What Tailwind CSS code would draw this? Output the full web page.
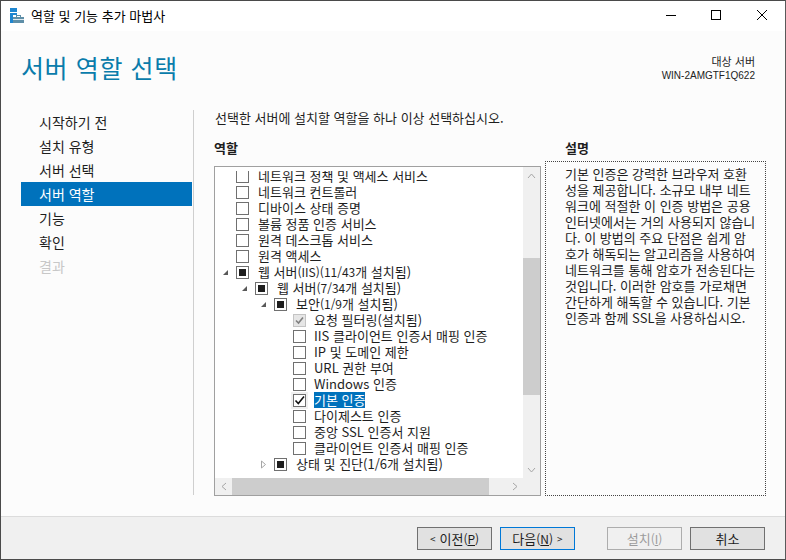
<!doctype html>
<html lang="ko"><head><meta charset="utf-8">
<script src="https://cdn.jsdelivr.net/npm/@tailwindcss/browser@4"></script>
</head>
<body class="m-0 overflow-hidden bg-[#fcfcfc]">
<div class="w-[786px] h-[560px] flex flex-col border border-[#4a4a4a] border-r-[#5a5a5a] font-['Noto_Sans_CJK_KR','Noto_Sans',sans-serif] text-[13px] text-[#1e1e1e] overflow-hidden">
  <!-- title bar -->
  <div class="h-[30px] shrink-0 bg-white flex items-center">
    <svg class="ml-[9px] mr-[7px] mb-[2px] shrink-0" width="14" height="15" viewBox="0 0 14 15"><rect x="0" y="0" width="7" height="4" fill="#1f86d0"/><rect x="0" y="5" width="7" height="2" fill="#1f86d0"/><rect x="0" y="7" width="3" height="8" fill="#1f86d0"/><rect x="3" y="9" width="11" height="6" fill="#5f8fa8"/><rect x="6.500" y="7.500" width="4" height="2" fill="none" stroke="#5f8fa8"/><rect x="3" y="11" width="11" height="1" fill="#dfe9ef"/></svg>
    <span class="text-black mb-[1px]">역할 및 기능 추가 마법사</span>
    <div class="ml-auto flex items-center">
      <svg width="46" height="30" viewBox="0 0 46 30"><path d="M19 14.500h10" stroke="#000" fill="none"/></svg>
      <svg width="46" height="30" viewBox="0 0 46 30"><rect x="18.500" y="9.500" width="9" height="9" stroke="#000" fill="none"/></svg>
      <svg width="46" height="30" viewBox="0 0 46 30"><path d="M18 9l10 10M28 9l-10 10" stroke="#000" fill="none"/></svg>
    </div>
  </div>
  <!-- header -->
  <div class="h-[71px] shrink-0 flex justify-between">
    <h1 class="ml-[20px] mt-[18px] text-[25px] leading-[36px] font-normal text-[#0a7cab] tracking-[0.6px]">서버 역할 선택</h1>
    <div class="mr-[30px] mt-[23px] text-right text-[11px] leading-[14px] text-[#222]">
      <div>대상 서버</div><div class="font-['Liberation_Sans'] text-[10px] leading-[15px]">WIN-2AMGTF1Q622</div>
    </div>
  </div>
  <!-- body -->
  <div class="flex-1 flex min-h-0">
    <nav class="w-[171px] ml-[20px] mt-[8px] shrink-0 flex flex-col text-[14px]">
      <div class="h-[24px] pl-[18px] flex items-center">시작하기 전</div>
      <div class="h-[24px] pl-[18px] flex items-center">설치 유형</div>
      <div class="h-[24px] pl-[18px] flex items-center">서버 선택</div>
      <div class="h-[24px] pl-[18px] flex items-center bg-[#0072bc] text-white">서버 역할</div>
      <div class="h-[24px] pl-[18px] flex items-center">기능</div>
      <div class="h-[24px] pl-[18px] flex items-center">확인</div>
      <div class="h-[24px] pl-[18px] flex items-center text-[#c8c8c8]">결과</div>
    </nav>
    <div class="w-px ml-px h-[385px] mt-[8px] bg-[#cfcfcf] shrink-0"></div>
    <main class="flex-1 ml-[20px] mr-[20px] flex flex-col">
      <p class="h-[28px] mt-[2px] ml-px flex items-center">선택한 서버에 설치할 역할을 하나 이상 선택하십시오.</p>
      <div class="flex h-[24px] font-bold items-center mt-[4px]">
        <div class="w-[351px]">역할</div><div>설명</div>
      </div>
      <div class="flex items-start mt-px">
        <div class="mt-[5px] w-[327px] h-[330px] border border-[#a0a0a0] bg-white flex flex-col shrink-0">
          <div class="flex-1 flex min-h-0">
            <div class="flex-1 min-w-0 overflow-hidden pt-[4px]">
              <div class="h-[307px] overflow-hidden"><div class="mt-[-3px] leading-[16px]">
                <div class="h-[16px] flex items-center pl-[21px]"><span class="w-[13px] h-[13px] border border-[#707070] bg-white shrink-0"></span><span class="ml-[9px]">네트워크 정책 및 액세스 서비스</span></div>
                <div class="h-[16px] flex items-center pl-[21px]"><span class="w-[13px] h-[13px] border border-[#707070] bg-white shrink-0"></span><span class="ml-[9px]">네트워크 컨트롤러</span></div>
                <div class="h-[16px] flex items-center pl-[21px]"><span class="w-[13px] h-[13px] border border-[#707070] bg-white shrink-0"></span><span class="ml-[9px]">디바이스 상태 증명</span></div>
                <div class="h-[16px] flex items-center pl-[21px]"><span class="w-[13px] h-[13px] border border-[#707070] bg-white shrink-0"></span><span class="ml-[9px]">볼륨 정품 인증 서비스</span></div>
                <div class="h-[16px] flex items-center pl-[21px]"><span class="w-[13px] h-[13px] border border-[#707070] bg-white shrink-0"></span><span class="ml-[9px]">원격 데스크톱 서비스</span></div>
                <div class="h-[16px] flex items-center pl-[21px]"><span class="w-[13px] h-[13px] border border-[#707070] bg-white shrink-0"></span><span class="ml-[9px]">원격 액세스</span></div>
                <div class="h-[16px] flex items-center pl-[7px]"><svg class="w-[7px] h-[7px] mr-[7px] shrink-0" viewBox="0 0 7 7"><path d="M6 1v5H1z" fill="#595959"/></svg><span class="w-[13px] h-[13px] border border-[#707070] bg-white shrink-0 flex items-center justify-center"><span class="w-[7px] h-[7px] bg-[#1e1e1e]"></span></span><span class="ml-[9px]">웹 서버<span class="text-[12px]">(IIS)(11/43</span>개 설치됨)</span></div>
                <div class="h-[16px] flex items-center pl-[26px]"><svg class="w-[7px] h-[7px] mr-[7px] shrink-0" viewBox="0 0 7 7"><path d="M6 1v5H1z" fill="#595959"/></svg><span class="w-[13px] h-[13px] border border-[#707070] bg-white shrink-0 flex items-center justify-center"><span class="w-[7px] h-[7px] bg-[#1e1e1e]"></span></span><span class="ml-[9px]">웹 서버<span class="text-[12px]">(7/34</span>개 설치됨)</span></div>
                <div class="h-[16px] flex items-center pl-[45px]"><svg class="w-[7px] h-[7px] mr-[7px] shrink-0" viewBox="0 0 7 7"><path d="M6 1v5H1z" fill="#595959"/></svg><span class="w-[13px] h-[13px] border border-[#707070] bg-white shrink-0 flex items-center justify-center"><span class="w-[7px] h-[7px] bg-[#1e1e1e]"></span></span><span class="ml-[9px]">보안<span class="text-[12px]">(1/9</span>개 설치됨)</span></div>
                <div class="h-[16px] flex items-center pl-[78px]"><span class="w-[13px] h-[13px] border border-[#c4c4c4] bg-[#e6e6e6] shrink-0 flex items-center justify-center"><svg width="11" height="11" viewBox="0 0 11 11"><path d="M2 5.500l2.500 2.500L9 2.500" stroke="#808080" stroke-width="1.600" fill="none"/></svg></span><span class="ml-[8px]">요청 필터링(설치됨)</span></div>
                <div class="h-[16px] flex items-center pl-[78px]"><span class="w-[13px] h-[13px] border border-[#707070] bg-white shrink-0"></span><span class="ml-[8px]">IIS 클라이언트 인증서 매핑 인증</span></div>
                <div class="h-[16px] flex items-center pl-[78px]"><span class="w-[13px] h-[13px] border border-[#707070] bg-white shrink-0"></span><span class="ml-[8px]">IP 및 도메인 제한</span></div>
                <div class="h-[16px] flex items-center pl-[78px]"><span class="w-[13px] h-[13px] border border-[#707070] bg-white shrink-0"></span><span class="ml-[8px]">URL 권한 부여</span></div>
                <div class="h-[16px] flex items-center pl-[78px]"><span class="w-[13px] h-[13px] border border-[#707070] bg-white shrink-0"></span><span class="ml-[8px]">Windows 인증</span></div>
                <div class="h-[16px] flex items-center pl-[78px]"><span class="w-[13px] h-[13px] border border-[#707070] bg-white shrink-0 flex items-center justify-center ring-2 ring-[#f0f0f0]"><svg width="11" height="11" viewBox="0 0 11 11"><path d="M1.500 5.500l2.800 3L10 1.500" stroke="#111" stroke-width="1.600" fill="none"/></svg></span><span class="ml-[8px] h-[16px] leading-[16px] bg-[#0072bc] text-white">기본 인증</span></div>
                <div class="h-[16px] flex items-center pl-[78px]"><span class="w-[13px] h-[13px] border border-[#707070] bg-white shrink-0"></span><span class="ml-[8px]">다이제스트 인증</span></div>
                <div class="h-[16px] flex items-center pl-[78px]"><span class="w-[13px] h-[13px] border border-[#707070] bg-white shrink-0"></span><span class="ml-[8px]">중앙 SSL 인증서 지원</span></div>
                <div class="h-[16px] flex items-center pl-[78px]"><span class="w-[13px] h-[13px] border border-[#707070] bg-white shrink-0"></span><span class="ml-[8px]">클라이언트 인증서 매핑 인증</span></div>
                <div class="h-[16px] flex items-center pl-[45px]"><svg class="w-[7px] h-[9px] mr-[7px] shrink-0" viewBox="0 0 7 9"><path d="M1.500 1v7l4-3.500z" fill="none" stroke="#a6a6a6"/></svg><span class="w-[13px] h-[13px] border border-[#707070] bg-white shrink-0 flex items-center justify-center"><span class="w-[7px] h-[7px] bg-[#1e1e1e]"></span></span><span class="ml-[9px]">상태 및 진단(1/6개 설치됨)</span></div>
              </div></div>
            </div>
            <div class="w-[17px] bg-[#f0f0f0] shrink-0 flex flex-col">
              <div class="h-[17px] flex items-center justify-center"><svg width="9" height="6" viewBox="0 0 9 6"><path d="M1 5l3.500-4L8 5" stroke="#a6a6a6" fill="none"/></svg></div>
              <div class="h-[74px]"></div>
              <div class="h-[137px] bg-[#cdcdcd]"></div>
              <div class="flex-1"></div>
              <div class="h-[17px] flex items-center justify-center"><svg width="9" height="6" viewBox="0 0 9 6"><path d="M1 1l3.500 4L8 1" stroke="#a6a6a6" fill="none"/></svg></div>
            </div>
          </div>
          <div class="h-[17px] shrink-0 bg-[#f0f0f0] flex">
            <div class="w-[17px] flex items-center justify-center"><svg width="6" height="9" viewBox="0 0 6 9"><path d="M5 1L1 4.500 5 8" stroke="#a6a6a6" fill="none"/></svg></div>
            <div class="w-[257px] bg-[#cdcdcd]"></div>
            <div class="flex-1 flex items-center justify-center"><svg width="6" height="9" viewBox="0 0 6 9"><path d="M1 1l4 3.500L1 8" stroke="#a6a6a6" fill="none"/></svg></div>
          </div>
        </div>
        <div class="ml-[4px] w-[221px] h-[335px] border border-dotted border-[#444] pl-[19px] pt-[4px] leading-[16px] whitespace-nowrap">기본 인증은 강력한 브라우저 호환<br>성을 제공합니다. 소규모 내부 네트<br>워크에 적절한 이 인증 방법은 공용<br>인터넷에서는 거의 사용되지 않습니<br>다. 이 방법의 주요 단점은 쉽게 암<br>호가 해독되는 알고리즘을 사용하여<br>네트워크를 통해 암호가 전송된다는<br>것입니다. 이러한 암호를 가로채면<br>간단하게 해독할 수 있습니다. 기본<br>인증과 함께 SSL을 사용하십시오.</div>
      </div>
    </main>
  </div>
  <!-- footer -->
  <div class="h-[43px] shrink-0 bg-[#f0f0f0] border-t border-[#dcdcdc] flex items-start pt-[10px]">
    <button class="ml-[416px] w-[75px] h-[23px] border border-[#707070] bg-[#e1e1e1] flex items-center justify-center gap-[4px]"><span class="text-[10px]">&lt;</span><span>이전<span class="text-[12px]">(<u>P</u>)</span></span></button>
    <button class="ml-[8px] w-[75px] h-[23px] border border-[#0078d7] bg-[#e1e1e1] flex items-center justify-center gap-[4px]"><span>다음<span class="text-[12px]">(<u>N</u>)</span></span><span class="text-[10px]">&gt;</span></button>
    <button class="ml-[32px] w-[75px] h-[23px] border border-[#adadad] bg-[#f0f0f0] text-[#9c9c9c]">설치<span class="text-[12px]">(<u>I</u>)</span></button>
    <button class="ml-[8px] w-[75px] h-[23px] border border-[#707070] bg-[#e1e1e1]">취소</button>
  </div>
</div>
</body></html>
